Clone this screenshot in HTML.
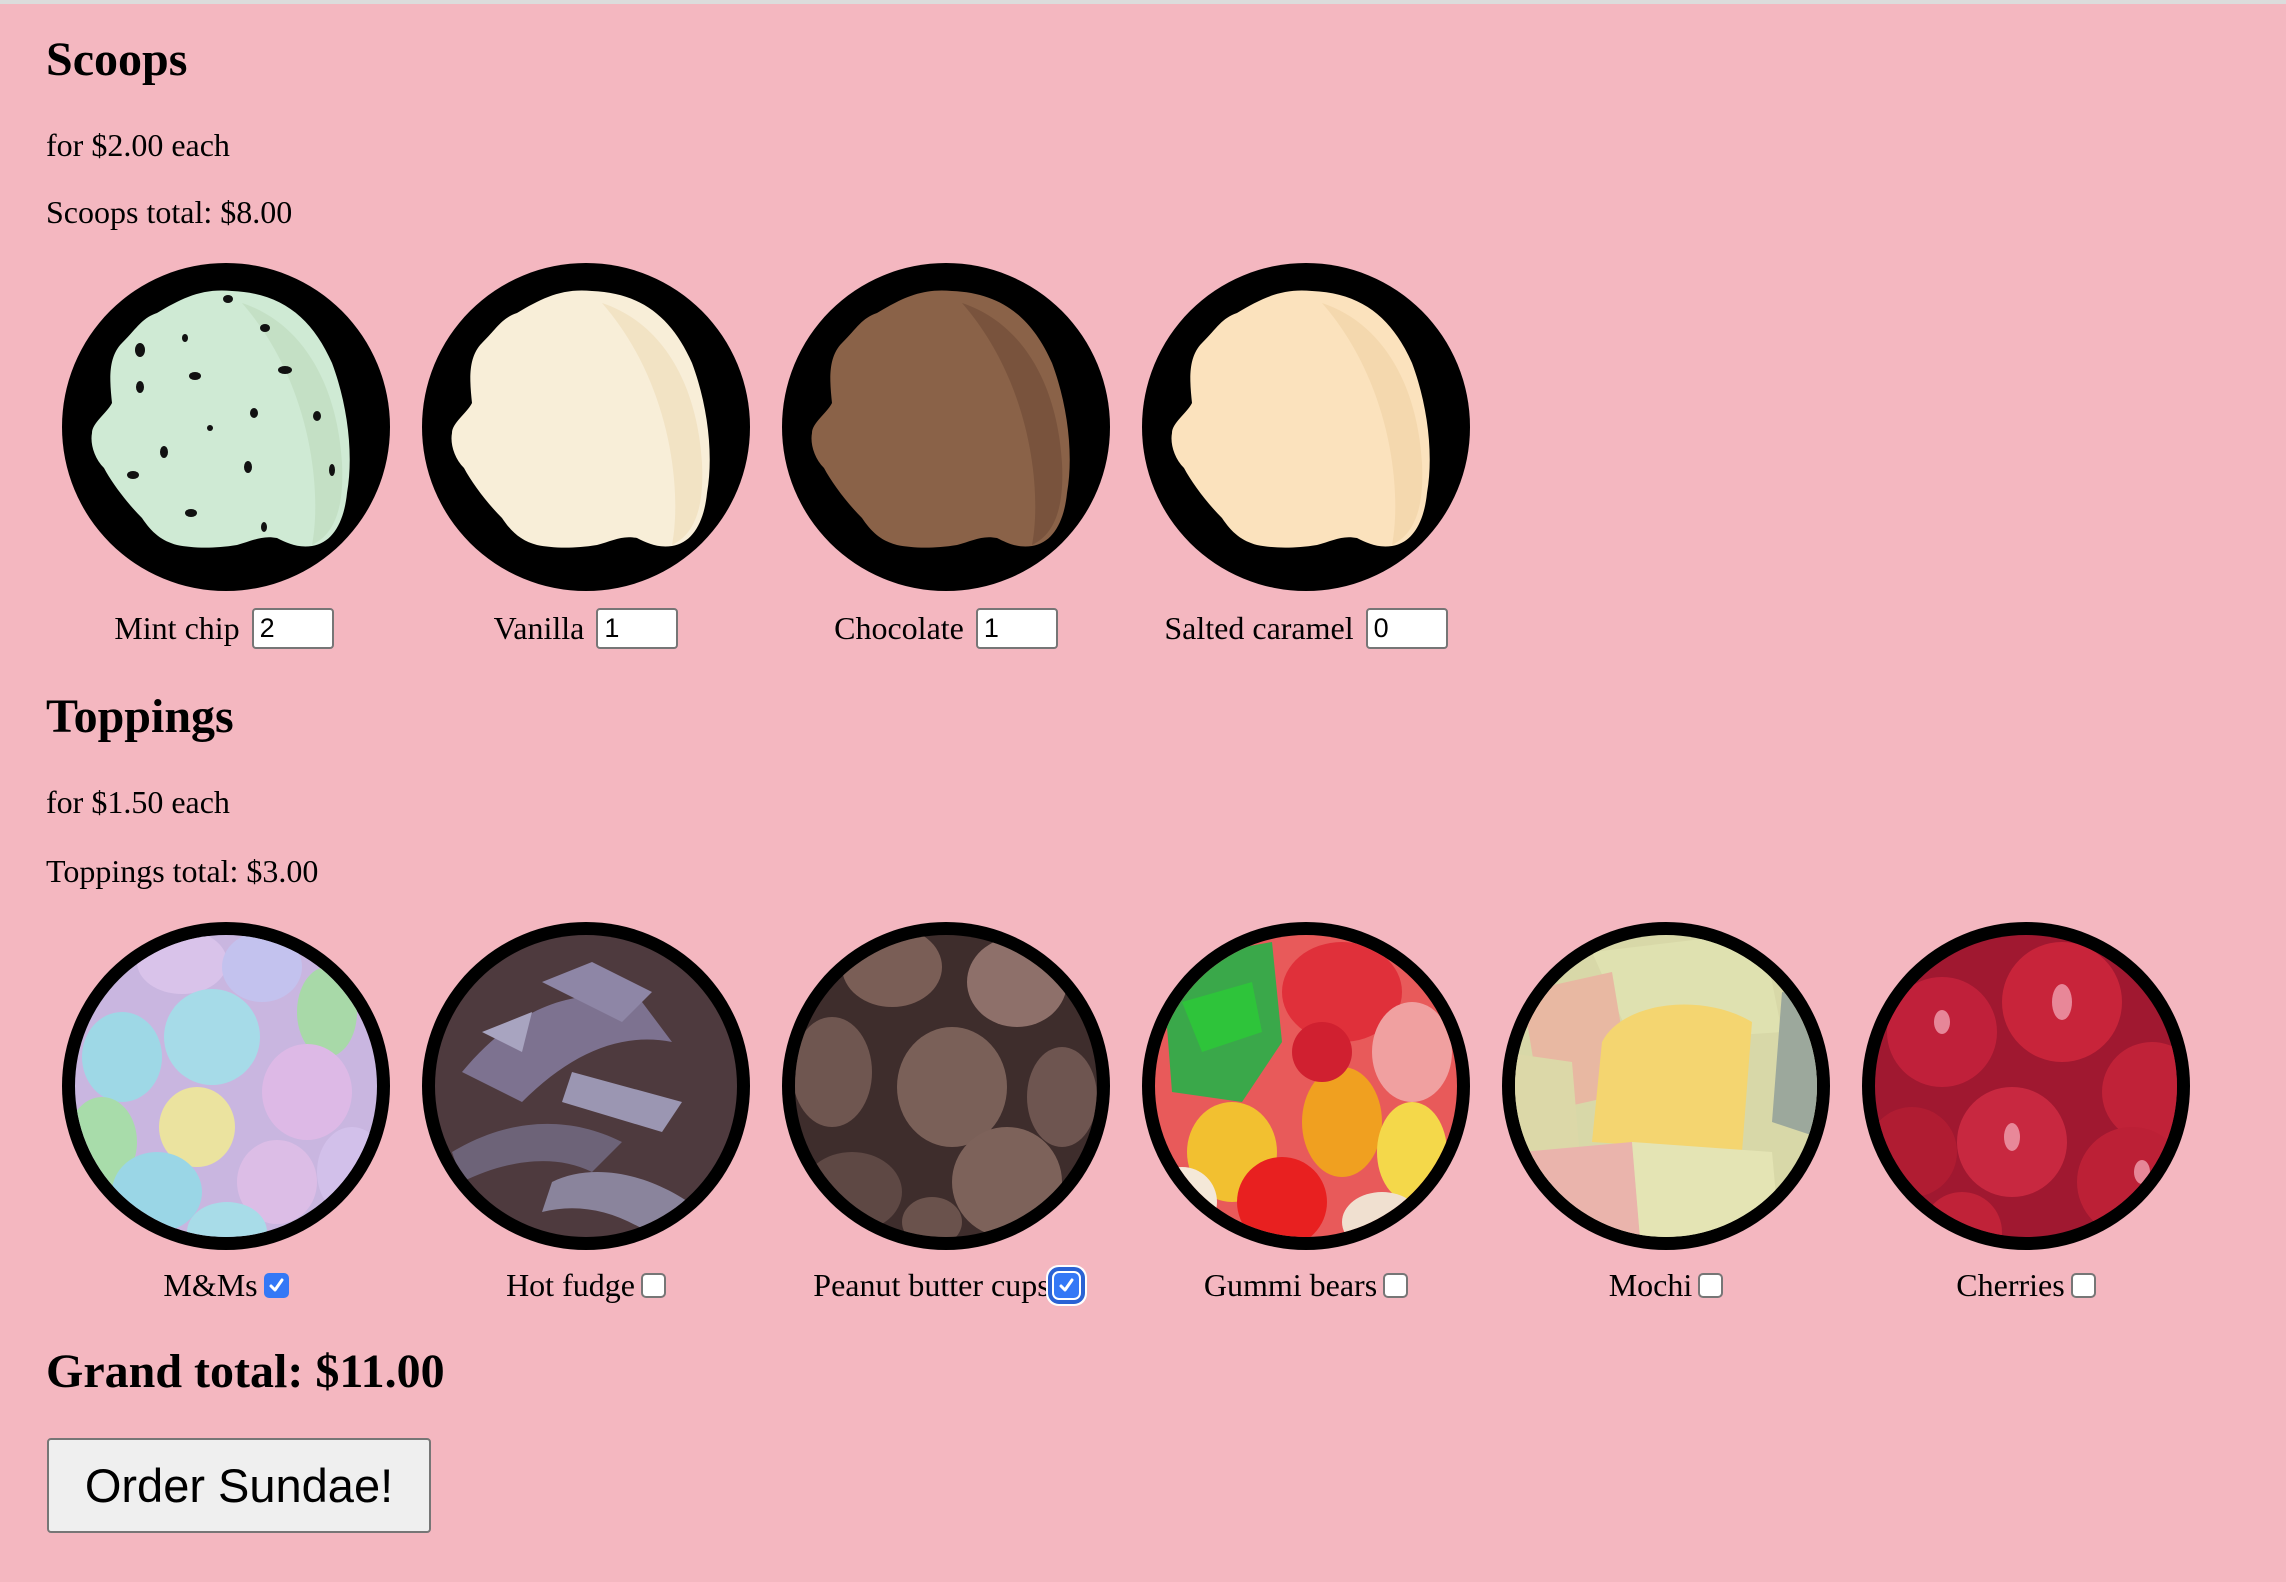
<!DOCTYPE html>
<html><head><meta charset="utf-8"><style>
html,body{margin:0;padding:0;width:2286px;height:1582px;overflow:hidden;background:#f4b7c0;position:relative;font-family:"Liberation Serif",serif;color:#000}
.bar{position:absolute;left:0;top:0;width:2286px;height:4px;background:#dcdcdc}
.t{position:absolute;left:46px;line-height:1;white-space:nowrap}
.h2{font-size:48px;font-weight:bold}
.p{font-size:32px}
.c{position:absolute;width:328px;height:328px}
.row{position:absolute;width:400px;height:50px;display:flex;justify-content:center;align-items:center;font-size:32px;white-space:nowrap}
.in{height:37px;border:2px solid #767676;border-radius:4px;background:#fff;margin-left:12px;font-family:"Liberation Sans",sans-serif;font-size:27px;line-height:37px;padding-left:6px;box-sizing:content-box;width:72px}
.cb{width:21px;height:21px;border:2px solid #767676;border-radius:5px;background:#fff;margin-left:6px;position:relative}
.cb.on{background:#3478f6;border-color:#3478f6}
.cb.on svg{position:absolute;left:2px;top:2px}
.focus{outline:4px solid #2a62d4;outline-offset:2px;box-shadow:0 0 0 8px #fff}
.btn{position:absolute;left:47px;top:1438px;width:380px;height:91px;background:#efefef;border:2px solid #767676;border-radius:4px;font-family:"Liberation Sans",sans-serif;font-size:47px;line-height:91px;text-align:center}
</style></head><body>
<div class="bar"></div>
<div class="t h2" style="top:36px">Scoops</div>
<div class="t p" style="top:129px">for $2.00 each</div>
<div class="t p" style="top:196px">Scoops total: $8.00</div>

<svg width="0" height="0" style="position:absolute"><defs>
<path id="scoop" d="M30,170 C30,160 45,150 50,140 C48,120 45,95 60,80 C75,65 80,55 95,50 C120,35 140,25 170,28 C220,30 250,55 270,100 C285,140 292,190 285,230 C282,260 270,280 250,283 C235,285 225,280 215,275 C200,272 190,278 175,282 C150,286 130,285 115,282 C100,278 90,270 80,255 C65,240 50,220 42,205 C32,195 28,180 30,170 Z"/>
<clipPath id="cc"><circle cx="164" cy="164" r="151"/></clipPath>
</defs></svg>

<svg class="c" style="left:62px;top:263px" viewBox="0 0 328 328"><circle cx="164" cy="164" r="164"/><use href="#scoop" fill="#cfead4"/><path d="M180,40 C240,60 275,120 280,200 C282,240 275,270 250,282 C260,230 250,120 180,40Z" fill="#b5d2ae" opacity=".4"/>
<g fill="#111"><ellipse cx="166" cy="36" rx="5" ry="4"/><ellipse cx="203" cy="65" rx="5" ry="4"/><ellipse cx="123" cy="75" rx="3" ry="4"/><ellipse cx="78" cy="87" rx="5" ry="7"/><ellipse cx="133" cy="113" rx="6" ry="4"/><ellipse cx="223" cy="107" rx="7" ry="4"/><ellipse cx="78" cy="124" rx="4" ry="6"/><ellipse cx="192" cy="150" rx="4" ry="5"/><ellipse cx="255" cy="153" rx="4" ry="5"/><circle cx="148" cy="165" r="3"/><ellipse cx="102" cy="189" rx="4" ry="6"/><ellipse cx="186" cy="204" rx="4" ry="6"/><ellipse cx="270" cy="207" rx="3" ry="6"/><ellipse cx="71" cy="212" rx="6" ry="4"/><ellipse cx="129" cy="250" rx="6" ry="4"/><ellipse cx="202" cy="264" rx="3" ry="5"/></g></svg>
<svg class="c" style="left:422px;top:263px" viewBox="0 0 328 328"><circle cx="164" cy="164" r="164"/><use href="#scoop" fill="#f8eed8"/><path d="M180,40 C240,60 275,120 280,200 C282,240 275,270 250,282 C260,230 250,120 180,40Z" fill="#e8d3a8" opacity=".4"/></svg>
<svg class="c" style="left:782px;top:263px" viewBox="0 0 328 328"><circle cx="164" cy="164" r="164"/><use href="#scoop" fill="#8a6248"/><path d="M180,40 C240,60 275,120 280,200 C282,240 275,270 250,282 C260,230 250,120 180,40Z" fill="#5e3f2c" opacity=".4"/></svg>
<svg class="c" style="left:1142px;top:263px" viewBox="0 0 328 328"><circle cx="164" cy="164" r="164"/><use href="#scoop" fill="#fbe2bd"/><path d="M180,40 C240,60 275,120 280,200 C282,240 275,270 250,282 C260,230 250,120 180,40Z" fill="#eccb98" opacity=".4"/></svg>

<div class="row" style="left:24px;top:603px">Mint chip<div class="in">2</div></div>
<div class="row" style="left:386px;top:603px">Vanilla<div class="in">1</div></div>
<div class="row" style="left:746px;top:603px">Chocolate<div class="in">1</div></div>
<div class="row" style="left:1106px;top:603px">Salted caramel<div class="in">0</div></div>

<div class="t h2" style="top:693px">Toppings</div>
<div class="t p" style="top:786px">for $1.50 each</div>
<div class="t p" style="top:855px">Toppings total: $3.00</div>

<svg class="c" style="left:62px;top:922px" viewBox="0 0 328 328"><circle cx="164" cy="164" r="164"/><g clip-path="url(#cc)"><rect width="328" height="328" fill="#c9b6e0"/>
<ellipse cx="120" cy="40" rx="45" ry="32" fill="#d9c3ea"/><ellipse cx="200" cy="45" rx="40" ry="35" fill="#c3c2ee"/><ellipse cx="265" cy="90" rx="30" ry="45" fill="#a8d9a8"/><ellipse cx="60" cy="135" rx="40" ry="45" fill="#9ed8e6"/><ellipse cx="150" cy="115" rx="48" ry="48" fill="#a6dbe8"/><ellipse cx="245" cy="170" rx="45" ry="48" fill="#ddb9e6"/><ellipse cx="40" cy="220" rx="35" ry="45" fill="#a8dcaa"/><ellipse cx="135" cy="205" rx="38" ry="40" fill="#ebe39f"/><ellipse cx="95" cy="270" rx="45" ry="40" fill="#9ad6e6"/><ellipse cx="215" cy="260" rx="40" ry="42" fill="#dcbde6"/><ellipse cx="290" cy="250" rx="35" ry="45" fill="#d2c0ea"/><ellipse cx="165" cy="310" rx="40" ry="30" fill="#a8dce8"/></g></svg>
<svg class="c" style="left:422px;top:922px" viewBox="0 0 328 328"><circle cx="164" cy="164" r="164"/><g clip-path="url(#cc)"><rect width="328" height="328" fill="#4e3a3e"/>
<path d="M40,150 C90,90 150,60 220,80 L250,120 C200,110 150,130 100,180Z" fill="#7d7290"/><path d="M120,60 L170,40 L230,70 L200,100Z" fill="#8e86a6"/><path d="M30,230 C80,200 140,190 200,220 L170,250 C130,230 80,240 40,260Z" fill="#6d6378"/><path d="M150,150 L260,180 L240,210 L140,180Z" fill="#9b96b2"/><path d="M130,260 C170,240 230,250 280,290 L240,320 C200,290 160,280 120,290Z" fill="#8a849c"/><path d="M60,110 L110,90 L100,130Z" fill="#a8a4c0"/></g></svg>
<svg class="c" style="left:782px;top:922px" viewBox="0 0 328 328"><circle cx="164" cy="164" r="164"/><g clip-path="url(#cc)"><rect width="328" height="328" fill="#3e2d2c"/>
<ellipse cx="110" cy="45" rx="50" ry="40" fill="#7a5e56"/><ellipse cx="235" cy="60" rx="50" ry="45" fill="#8e706a"/><ellipse cx="50" cy="150" rx="40" ry="55" fill="#6f5650"/><ellipse cx="170" cy="165" rx="55" ry="60" fill="#7a6058"/><ellipse cx="280" cy="175" rx="35" ry="50" fill="#6e5550"/><ellipse cx="225" cy="260" rx="55" ry="55" fill="#7d625a"/><ellipse cx="70" cy="270" rx="50" ry="40" fill="#5e4844"/><ellipse cx="150" cy="300" rx="30" ry="25" fill="#6a524c"/></g></svg>
<svg class="c" style="left:1142px;top:922px" viewBox="0 0 328 328"><circle cx="164" cy="164" r="164"/><g clip-path="url(#cc)"><rect width="328" height="328" fill="#e85a5a"/>
<path d="M20,40 L130,20 L140,120 L100,180 L30,170Z" fill="#3aa84a"/><path d="M40,80 L110,60 L120,110 L60,130Z" fill="#2ec43a"/><ellipse cx="200" cy="70" rx="60" ry="50" fill="#e0303a"/><ellipse cx="270" cy="130" rx="40" ry="50" fill="#f0a0a0"/><ellipse cx="90" cy="230" rx="45" ry="50" fill="#f2c030"/><ellipse cx="200" cy="200" rx="40" ry="55" fill="#f0a020"/><ellipse cx="270" cy="230" rx="35" ry="50" fill="#f4d84a"/><ellipse cx="140" cy="280" rx="45" ry="45" fill="#e82020"/><ellipse cx="40" cy="280" rx="35" ry="35" fill="#f4e8d8"/><ellipse cx="240" cy="300" rx="40" ry="30" fill="#f0e0d0"/><ellipse cx="180" cy="130" rx="30" ry="30" fill="#d02030"/></g></svg>
<svg class="c" style="left:1502px;top:922px" viewBox="0 0 328 328"><circle cx="164" cy="164" r="164"/><g clip-path="url(#cc)"><rect width="328" height="328" fill="#d8d8a8"/>
<path d="M90,30 L260,10 L280,110 L130,120Z" fill="#dfe1b0"/><path d="M20,70 L110,50 L130,170 L40,190Z" fill="#e8b8a2"/><path d="M280,70 L340,80 L330,220 L270,200Z" fill="#9ca89c"/><path d="M100,120 C120,80 200,70 250,100 L240,230 L90,220Z" fill="#f4d570"/><path d="M0,130 L70,140 L80,260 L0,260Z" fill="#dcd8a8"/><path d="M20,230 L130,220 L140,340 L30,340Z" fill="#eab4ac"/><path d="M130,220 L270,230 L280,340 L140,340Z" fill="#e4e4b4"/></g></svg>
<svg class="c" style="left:1862px;top:922px" viewBox="0 0 328 328"><circle cx="164" cy="164" r="164"/><g clip-path="url(#cc)"><rect width="328" height="328" fill="#a01830"/>
<circle cx="200" cy="80" r="60" fill="#c8243a"/><circle cx="80" cy="110" r="55" fill="#c0203a"/><circle cx="290" cy="170" r="50" fill="#c02238"/><circle cx="150" cy="220" r="55" fill="#c82840"/><circle cx="270" cy="260" r="55" fill="#bc2036"/><circle cx="50" cy="230" r="45" fill="#b01c32"/><circle cx="100" cy="310" r="40" fill="#c02238"/>
<g fill="#f0a0b0" opacity=".8"><ellipse cx="200" cy="80" rx="10" ry="18"/><ellipse cx="80" cy="100" rx="8" ry="12"/><ellipse cx="150" cy="215" rx="8" ry="14"/><ellipse cx="280" cy="250" rx="8" ry="12"/></g></g></svg>

<div class="row" style="left:26px;top:1260px">M&amp;Ms<div class="cb on"><svg width="17" height="17" viewBox="0 0 17 17"><path d="M3,9 L7,13 L14,3" stroke="#fff" stroke-width="3" fill="none" stroke-linecap="round" stroke-linejoin="round"/></svg></div></div>
<div class="row" style="left:386px;top:1260px">Hot fudge<div class="cb"></div></div>
<div class="row" style="left:746px;top:1260px">Peanut butter cups<div class="cb on focus" style="margin-left:4px"><svg width="17" height="17" viewBox="0 0 17 17"><path d="M3,9 L7,13 L14,3" stroke="#fff" stroke-width="3" fill="none" stroke-linecap="round" stroke-linejoin="round"/></svg></div></div>
<div class="row" style="left:1106px;top:1260px">Gummi bears<div class="cb"></div></div>
<div class="row" style="left:1466px;top:1260px">Mochi<div class="cb"></div></div>
<div class="row" style="left:1826px;top:1260px">Cherries<div class="cb"></div></div>

<div class="t" style="top:1348px;font-size:48px;font-weight:bold">Grand total: $11.00</div>
<div class="btn">Order Sundae!</div>
</body></html>
